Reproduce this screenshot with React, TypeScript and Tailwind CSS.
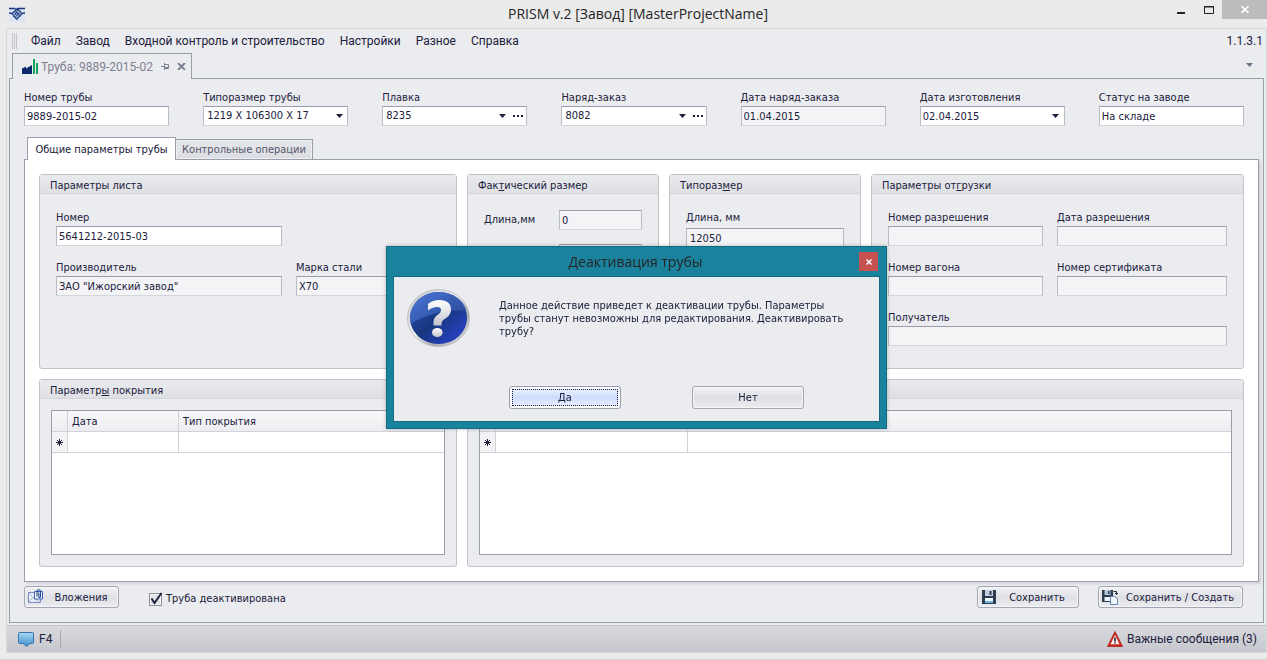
import React from "react";

const inputSkin =
  "border border-t-[#9b9dab] border-x-[#b9bbc7] border-b-[#d4d6de] h-5 w-full min-w-0";

function DownArrow({ className = "" }: { className?: string }) {
  return (
    <svg className={className} width="7" height="4" viewBox="0 0 7 4" fill="currentColor" aria-hidden="true">
      <path d="M0 0h7L3.5 4z" />
    </svg>
  );
}

type FieldProps = {
  id: string;
  label: string;
  value?: string;
  disabled?: boolean;
  kind?: "text" | "select" | "date";
  more?: boolean;
  className?: string;
};

function Field({ id, label, value = "", disabled, kind = "text", more, className = "" }: FieldProps) {
  return (
    <div className={`flex min-w-0 flex-col ${className}`}>
      <label htmlFor={id} className="h-4 whitespace-nowrap leading-4">
        {label}
      </label>
      <div className={`flex items-center ${inputSkin} ${disabled ? "bg-[#f4f4f6]" : "bg-white"}`}>
        {kind === "select" ? (
          <div className="relative flex h-full min-w-0 flex-1 items-center">
            <select id={id} defaultValue={value} className="h-full w-full appearance-none bg-transparent pl-[3px] pr-4 leading-[18px] outline-none">
              <option>{value}</option>
            </select>
            <DownArrow className="pointer-events-none absolute right-1" />
          </div>
        ) : (
          <input id={id} defaultValue={value} readOnly={disabled} className="h-full w-full min-w-0 flex-1 bg-transparent px-0.5 outline-none" />
        )}
        {kind === "date" && (
          <button aria-label="Открыть календарь" className="flex h-full w-4 items-center justify-center">
            <DownArrow />
          </button>
        )}
        {more && (
          <button aria-label="Выбрать" className="flex h-full w-4 items-center justify-center">
            <svg width="10" height="2" viewBox="0 0 10 2" fill="currentColor">
              <path d="M0 0h2v2H0zM4 0h2v2H4zM8 0h2v2H8z" />
            </svg>
          </button>
        )}
      </div>
    </div>
  );
}

function Group({ title, children, className = "" }: { title: React.ReactNode; children: React.ReactNode; className?: string }) {
  return (
    <section className={`flex min-w-0 flex-col rounded-[3px] border border-[#c1c2ca] bg-[#ebecef] ${className}`}>
      <h2 className="h-[19px] shrink-0 whitespace-nowrap border-b border-[#d3d4da] bg-linear-to-b from-[#e9eaed] to-[#dfe0e4] px-2.5 leading-[21px]">
        {title}
      </h2>
      {children}
    </section>
  );
}

function EditGrid({ columns, first }: { columns: string[]; first: string }) {
  const cell = "border-r border-b border-[#d0d1d9] last:border-r-0";
  return (
    <div className="m-[11px] flex-1 border border-[#9b9dab] bg-white">
      <table className="w-full table-fixed border-separate border-spacing-0">
        <colgroup>
          <col className="w-4" />
          <col className={first} />
          <col />
        </colgroup>
        <thead className="bg-linear-to-b from-[#f8f8f9] to-[#ecedf0]">
          <tr className="h-[21px]">
            <td className={cell} />
            {columns.map((c, i) => (
              <th key={i} scope="col" className={`${cell} px-1 pt-0.5 text-left font-normal`}>
                {c}
              </th>
            ))}
          </tr>
        </thead>
        <tbody>
          <tr className="h-[21px]">
            <td className={`${cell} bg-[#f3f3f5]`}>
              <svg className="ml-1" width="7" height="7" viewBox="0 0 7 7" fill="currentColor" aria-hidden="true">
                <path d="M3 0h1v7H3zM0 3h7v1H0zM1 1h1v1H1zM5 1h1v1H5zM2 2h1v1H2zM4 2h1v1H4zM2 4h1v1H2zM4 4h1v1H4zM1 5h1v1H1zM5 5h1v1H5z" />
              </svg>
            </td>
            <td className={cell} />
            <td className={cell} />
          </tr>
        </tbody>
      </table>
    </div>
  );
}

function HandshakeIcon() {
  return (
    <svg width="16" height="15" viewBox="0 0 16 15" fill="none" aria-hidden="true">
      <path fill="#dce3f7" d="M0 0h16v15H0z" />
      <path stroke="#1d3b7c" strokeWidth="1.3" d="M0 1.5h5.500L7 2.500l2-1h7M0 6l3 .5L7 3l2-.5L13 6.500l3-.5" />
      <path fill="#6d84b8" d="M3.500 6.500L7 4l2 .5 4 3.500-5 5-5-5z" />
      <path stroke="#1d3b7c" strokeWidth=".8" d="M3 7l5 5 5-5M5 6l5 4.500M7 5l4.500 4M4 9l3.500 3.500 1 .5M8 3.500L5.500 6.500 8 7.500l2-1.500" />
      <path stroke="#dce3f7" strokeWidth=".7" d="M4.500 7.500l2-2M6 9l2-2M7.500 10.500l2-2" />
    </svg>
  );
}

function FactoryIcon() {
  return (
    <svg width="17" height="15" viewBox="0 0 17 15" aria-hidden="true">
      <path fill="#0b2a6b" d="M0 15V9.500L4 7.500V9.500L10 6v9z" />
      <path fill="#12a45c" d="M11 0h2v15h-2zM14 4h2v11h-2z" />
    </svg>
  );
}

function QuestionIcon() {
  return (
    <svg width="64" height="58" viewBox="0 0 64 58" aria-hidden="true">
      <defs>
        <linearGradient id="q-rim" x1="0" y1="0" x2="1" y2="1">
          <stop offset="0" stopColor="#b9bac0" />
          <stop offset=".45" stopColor="#f5f5f7" />
          <stop offset=".7" stopColor="#a9aab0" />
          <stop offset="1" stopColor="#f1f1f3" />
        </linearGradient>
        <linearGradient id="q-face" x1="0" y1="0" x2="1" y2="1">
          <stop offset="0" stopColor="#2c55b4" />
          <stop offset=".5" stopColor="#17367f" />
          <stop offset="1" stopColor="#2b45d8" />
        </linearGradient>
        <linearGradient id="q-shine" x1="0" y1="0" x2="1" y2="1">
          <stop offset="0" stopColor="#5480e4" />
          <stop offset="1" stopColor="#24438f" />
        </linearGradient>
        <linearGradient id="q-mark" x1="0" y1="0" x2="0" y2="1">
          <stop offset="0" stopColor="#ffffff" />
          <stop offset="1" stopColor="#c3c4ca" />
        </linearGradient>
      </defs>
      <ellipse cx="31.500" cy="29" rx="31" ry="28.500" fill="url(#q-rim)" stroke="#b5b6bc" strokeWidth=".8" />
      <ellipse cx="31.500" cy="29" rx="28.500" ry="26" fill="url(#q-face)" />
      <path fill="url(#q-shine)" opacity=".85" d="M3 31C3 15 16 3 31.500 3S57 11 59.500 22C44 20 20 24 4 35z" />
      <path
        fill="url(#q-mark)"
        d="M21 21.500V15c3-2.800 7-4 11.500-4C40 11 44 14.800 44 20.500c0 5-3 7.300-6 9.300-2.200 1.500-3.500 2.700-3.500 5v1.700h-8v-3c0-4 2-6 4.500-8 2-1.500 3-2.600 3-4.500 0-2-1.300-3-3.700-3-3.300 0-6.300 1.300-9.300 3.500z"
      />
      <ellipse cx="30.300" cy="43.500" rx="5.300" ry="4.500" fill="url(#q-mark)" />
    </svg>
  );
}

function AttachmentIcon() {
  return (
    <svg className="-mt-0.5" width="16" height="15" viewBox="0 0 16 15" fill="none" aria-hidden="true">
      <path fill="#eceffa" stroke="#7b8dc0" d="M.5 3.500h12v10H.5z" />
      <path stroke="#9aa8d0" strokeWidth=".8" d="M.5 3.500l4.500 5-4.500 5M5 8.500l2 1.500 6 3.500" />
      <path fill="#f3f6fd" stroke="#3e62b5" d="M6.500 2.500h8v7.500h-8z" />
      <path stroke="#27488f" strokeWidth="1.100" d="M9 7.500V2.500C9 .2 12.500.2 12.500 2.500v5c0 1.500-1.700 1.500-1.700 0V3.500" />
    </svg>
  );
}

function SaveIcon() {
  return (
    <svg width="14" height="14" viewBox="0 0 14 14" aria-hidden="true">
      <path fill="#2e3c52" d="M0 0h14v14H0z" />
      <path fill="#c6d0dd" d="M3 0h8v6H3z" />
      <path fill="#2e3c52" d="M7.500 1h2v4h-2z" />
      <path fill="#f4f8fd" d="M3 8h8v5H3z" />
      <path fill="#70b3e2" d="M3 11h8v2H3z" />
    </svg>
  );
}

function SaveNewIcon() {
  return (
    <svg width="16" height="15" viewBox="0 0 16 15" aria-hidden="true">
      <path fill="#2e3c52" d="M0 0h11v12H0z" />
      <path fill="#b4c5d8" d="M2.500 0h6v5h-6z" />
      <path fill="#2e3c52" d="M6 1h1.500v3H6z" />
      <path fill="#f0f4f9" d="M2.500 7h6v4h-6z" />
      <path fill="#eef5fc" stroke="#6b8ab4" d="M8.500 6.500h4l3 2v6h-7z" />
      <path fill="none" stroke="#1e2a44" d="M11.500 1.500h3V4M13 3l1.500 1.500L16 3" />
    </svg>
  );
}

function MessageIcon() {
  return (
    <svg width="16" height="15" viewBox="0 0 16 15" aria-hidden="true">
      <defs>
        <linearGradient id="msg" x1="0" y1="0" x2="0" y2="1">
          <stop offset="0" stopColor="#a8d8f3" />
          <stop offset="1" stopColor="#3f8dcb" />
        </linearGradient>
      </defs>
      <path fill="url(#msg)" stroke="#3875ae" d="M.5 1.500q0-1 1-1h13q1 0 1 1v9q0 1-1 1H12l-3.500 3-3.500-3H1.500q-1 0-1-1z" />
    </svg>
  );
}

function WarningIcon() {
  return (
    <svg width="16" height="16" viewBox="0 0 16 16" aria-hidden="true">
      <path fill="#cf2a20" stroke="#a8201b" strokeWidth=".8" strokeLinejoin="round" d="M8 .5L15.500 15.500H.5z" />
      <path fill="#f6efee" d="M8 4l4.500 9.200H3.500z" />
      <path fill="#2b2230" d="M7.200 6.500h1.600v4H7.200zM7.200 11.200h1.600v1.300H7.200z" />
    </svg>
  );
}

const MENU = ["Файл", "Завод", "Входной контроль и строительство", "Настройки", "Разное", "Справка"];

const pushButton =
  "flex h-[22px] items-center rounded-[3px] border border-[#a4a5b1] bg-linear-to-b from-[#f2f3f5] via-[#dee0e5] to-[#ebecef] shadow-[inset_0_0_0_1px_#f6f6f8]";

export default function App() {
  return (
    <div className="flex min-h-screen flex-col border-b border-[#d2d2d4] bg-[#ebebeb] pb-1.5 pl-1.5 font-['DejaVu_Sans_Condensed',sans-serif] text-[11px] text-[#20203c]">
      <header className="flex h-7 shrink-0 items-start">
        <div className="flex h-7 flex-1 items-center pl-[3px]">
          <HandshakeIcon />
        </div>
        <h1 className="whitespace-nowrap font-['Open_Sans','Noto_Sans',sans-serif] text-[14px] leading-7 text-[#252525]">
          PRISM v.2 [Завод] [MasterProjectName]
        </h1>
        <div className="flex flex-1 justify-end text-[#222]">
          <button aria-label="Свернуть" className="flex h-[19px] w-7 items-center justify-center">
            <svg width="8" height="12" viewBox="0 0 8 12"><path fill="currentColor" d="M0 8h8v2H0z" /></svg>
          </button>
          <button aria-label="Развернуть" className="flex h-[19px] w-[27px] items-center justify-center">
            <svg width="10" height="8" viewBox="0 0 10 8"><path fill="none" stroke="currentColor" d="M.5 1h9v6.500h-9zM0 .5h10" /></svg>
          </button>
          <button aria-label="Закрыть" className="flex h-[19px] w-[45px] items-center justify-center bg-[#bcbcbc] text-white">
            <svg width="8" height="7" viewBox="0 0 8 7"><path fill="none" stroke="currentColor" strokeWidth="1.600" d="M.5 0l7 7M7.500 0l-7 7" /></svg>
          </button>
        </div>
      </header>

      <div className="flex flex-1 flex-col border border-[#d8d9dc] bg-[#ebecef]">
        <nav className="flex h-6 shrink-0 items-center gap-[15px] pl-[5px] pr-[3px] font-[Roboto,'Open_Sans',sans-serif] text-[12px] leading-[22px]">
          <svg className="-mr-0.5" width="6" height="16" viewBox="0 0 6 16" stroke="#c4c5cc" aria-hidden="true">
            <path d="M.5 0v16M2.500 0v16M4.500 0v16" />
          </svg>
          {MENU.map((m) => (
            <button key={m} className="whitespace-nowrap">{m}</button>
          ))}
          <span className="ml-auto">1.1.3.1</span>
        </nav>

        <div className="flex h-[25px] shrink-0 items-end justify-between pl-[5px] pr-3">
          <div className="relative -mb-px flex h-[26px] w-[180px] items-center border border-b-0 border-[#9b9dab] bg-[#ebecef] px-[9px] text-[#7e8091]">
            <FactoryIcon />
            <button className="ml-0.5 whitespace-nowrap font-[Roboto,'Open_Sans',sans-serif] text-[12px]">Труба: 9889-2015-02</button>
            <button aria-label="Закрепить" className="ml-auto">
              <svg width="8" height="7" viewBox="0 0 8 7" fill="none" stroke="currentColor"><path d="M0 3.500h3M3.500 0v7M3.500 1.500h4v4h-4M3.500 4.500h4" /></svg>
            </button>
            <button aria-label="Закрыть вкладку" className="-mr-1 ml-2">
              <svg width="9" height="7" viewBox="0 0 9 7" fill="none" stroke="currentColor" strokeWidth="2"><path d="M1 0l7 7M8 0L1 7" /></svg>
            </button>
          </div>
          <button aria-label="Список вкладок" className="flex h-[26px] w-[8px] items-center text-[#6f7186]">
            <DownArrow />
          </button>
        </div>

        <main className="mx-0.5 mb-0.5 flex flex-1 flex-col border border-[#9b9dab] pb-3.5 pl-3.5 pr-1 pt-[11px]">
          <div className="mr-[15px] grid grid-cols-7 gap-x-[34px]">
            <Field id="pipe-number" label="Номер трубы" value="9889-2015-02" />
            <Field id="pipe-size" label="Типоразмер трубы" value="1219 X 106300 X 17" kind="select" />
            <Field id="heat" label="Плавка" value="8235" kind="select" more />
            <Field id="order" label="Наряд-заказ" value="8082" kind="select" more />
            <Field id="order-date" label="Дата наряд-заказа" value="01.04.2015" disabled />
            <Field id="made-date" label="Дата изготовления" value="02.04.2015" kind="date" />
            <Field id="status" label="Статус на заводе" value="На складе" />
          </div>

          <div role="tablist" className="mt-[11px] flex h-[22px] items-end pl-[3px]">
            <button role="tab" aria-selected="true" className="relative -mb-px h-[23px] w-[149px] whitespace-nowrap border border-b-0 border-[#9b9dab] bg-white pt-0.5">
              Общие параметры трубы
            </button>
            <button role="tab" aria-selected="false" className="h-5 w-[137px] whitespace-nowrap border border-b-0 border-l-0 border-[#9b9dab] bg-linear-to-b from-[#e6e7ea] to-[#dcdde2] pt-0.5 text-[#55566c] shadow-[inset_0_0_0_1px_#eeeff2]">
              Контрольные операции
            </button>
          </div>

          <div className="flex flex-1 flex-col gap-2.5 border border-[#9b9dab] bg-white p-3.5 shadow-[2px_2px_2px_#d3d4d9]">
            <div className="grid grid-cols-[418fr_192fr_192fr_373fr] gap-2.5">
              <Group title="Параметры листа">
                <div className="grid grid-cols-[226fr_144fr] gap-3.5 px-4 pb-[22px] pt-4">
                  <Field id="plate-number" label="Номер" value="5641212-2015-03" className="col-start-1" />
                  <Field id="maker" label="Производитель" value={'ЗАО "Ижорский завод"'} disabled className="col-start-1" />
                  <Field id="steel" label="Марка стали" value="X70" disabled />
                </div>
              </Group>
              <Group title={<>Фак<u>т</u>ический размер</>}>
                <div className="flex flex-col gap-3.5 px-4 pb-[22px] pt-4">
                  <div className="flex h-5 items-center justify-between">
                    <label htmlFor="actual-length">Длина,мм</label>
                    <input id="actual-length" readOnly defaultValue="0" className={`${inputSkin} max-w-[83px] bg-[#f4f4f6] px-0.5`} />
                  </div>
                  <div className="flex h-5 items-center justify-end">
                    <input aria-label="Диаметр" readOnly className={`${inputSkin} max-w-[83px] bg-[#f4f4f6] px-0.5`} />
                  </div>
                </div>
              </Group>
              <Group title={<>Типораз<u>м</u>ер</>}>
                <div className="flex flex-col gap-0.5 px-4 pb-4 pt-4">
                  <label htmlFor="nominal-length" className="h-4 leading-4">Длина, мм</label>
                  <input id="nominal-length" readOnly defaultValue="12050" className={`${inputSkin} bg-[#f4f4f6] px-[3px]`} />
                </div>
              </Group>
              <Group title={<>Параметры от<u>г</u>рузки</>}>
                <div className="grid grid-cols-[155fr_170fr] gap-3.5 px-4 pb-[22px] pt-4">
                  <Field id="permit" label="Номер разрешения" disabled />
                  <Field id="permit-date" label="Дата разрешения" disabled />
                  <Field id="wagon" label="Номер вагона" disabled />
                  <Field id="certificate" label="Номер сертификата" disabled />
                  <Field id="recipient" label="Получатель" disabled className="col-span-2" />
                </div>
              </Group>
            </div>
            <div className="grid flex-1 grid-cols-[418fr_777fr] gap-2.5">
              <Group title={<>Параметр<u>ы</u> покрытия</>}>
                <EditGrid columns={["Дата", "Тип покрытия"]} first="w-[111px]" />
              </Group>
              <Group title="">
                <EditGrid columns={["", ""]} first="w-48" />
              </Group>
            </div>
          </div>

          <div className="mr-4 mt-1 flex items-center">
            <button className={`${pushButton} w-[95px] pl-[3px]`}>
              <AttachmentIcon />
              <span className="flex-1 pt-0.5 text-center">Вложения</span>
            </button>
            <label className="ml-[30px] flex items-center gap-1 pt-1">
              <span className="relative flex">
                <input type="checkbox" defaultChecked className="peer h-[13px] w-[13px] appearance-none border border-[#8d8f9f] bg-[#e3e4e9] shadow-[inset_0_0_0_1px_#f6f6f8]" />
                <svg className="pointer-events-none absolute bottom-0 left-0 hidden peer-checked:block" width="14" height="14" viewBox="0 0 14 14" fill="none" stroke="currentColor" strokeWidth="2" aria-hidden="true">
                  <path d="M2.500 6.500l3 4.500L12.500 1" />
                </svg>
              </span>
              Труба деактивирована
            </label>
            <button className={`${pushButton} ml-auto w-[102px] pl-1`}>
              <SaveIcon />
              <span className="flex-1 pt-0.5 text-center">Сохранить</span>
            </button>
            <button className={`${pushButton} ml-[19px] w-[145px] pl-[3px]`}>
              <SaveNewIcon />
              <span className="flex-1 whitespace-nowrap pt-0.5 text-center">Сохранить / Создать</span>
            </button>
          </div>
        </main>

        <footer className="flex h-[27px] shrink-0 items-center justify-between border-t border-[#bfc0c9] bg-linear-to-b from-[#d9dade] to-[#c6c7cd] pl-[11px] pr-[9px] font-[Roboto,'Open_Sans',sans-serif] text-[12px]">
          <button className="flex h-[18px] items-center gap-[5px] border-r border-[#a9aab4] pr-2">
            <MessageIcon />
            F4
          </button>
          <button className="flex items-center gap-1 whitespace-nowrap">
            <WarningIcon />
            Важные сообщения (3)
          </button>
        </footer>
      </div>

      <div className="fixed inset-0 flex items-center justify-center pl-1.5 pt-[15px]">
        <div
          role="dialog"
          aria-labelledby="dialog-title"
          className="flex w-[501px] flex-col border border-[#146a80] bg-[#1a829d] px-1.5 pb-1.5 shadow-[0_0_4px_rgba(0,0,0,0.25)]"
        >
          <div className="flex h-[29px] items-center pr-0.5">
            <h2 id="dialog-title" className="flex-1 pl-[19px] text-center font-['Open_Sans','Noto_Sans',sans-serif] text-[14px] text-[#252525]">
              Деактивация трубы
            </h2>
            <button aria-label="Закрыть окно" className="flex h-[19px] w-[19px] items-center justify-center bg-[#c75050] text-white">
              <svg width="6" height="6" viewBox="0 0 6 6" fill="none" stroke="currentColor" strokeWidth="1.500"><path d="M.5.5l5 5M5.500.5l-5 5" /></svg>
            </button>
          </div>
          <div className="flex flex-col border border-[#146a80] bg-[#ebecef] pb-3 pl-[13px] pt-3">
            <div className="flex h-[97px]">
              <QuestionIcon />
              <p className="ml-7 mt-2.5 w-[360px] whitespace-nowrap leading-[13px]">
                Данное действие приведет к деактивации трубы. Параметры<br />
                трубы станут невозможны для редактирования. Деактивировать<br />
                трубу?
              </p>
            </div>
            <div className="flex gap-[71px] pl-[102px]">
              <button className="flex h-[23px] w-28 rounded-[3px] border border-[#9b9dab] bg-[#fbfbfd] p-0.5">
                <span className="flex h-full w-full items-center justify-center border border-dotted border-[#1a1a3a] bg-linear-to-b from-[#e9eeff] via-[#cddcfc] to-[#e6edff] pt-0.5">Да</span>
              </button>
              <button className={`${pushButton} h-[23px] w-28 justify-center pt-0.5`}>Нет</button>
            </div>
          </div>
        </div>
      </div>
    </div>
  );
}
